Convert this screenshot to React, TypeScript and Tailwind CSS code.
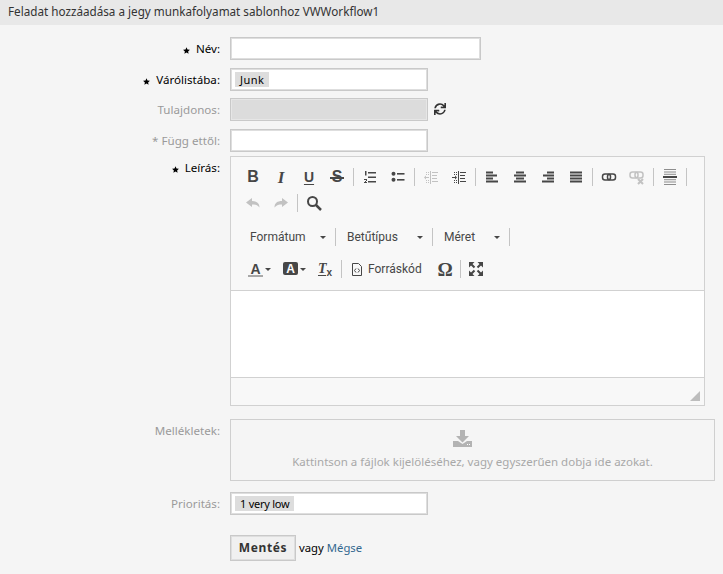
import React from "react";
import { FaSync } from "react-icons/fa";

const font = "font-['Noto_Sans',sans-serif]";
const Star = () => (
  <svg width="7" height="7" viewBox="0 0 24 24" className="mr-[6px] mt-[4px] shrink-0"><path fill="#000" d="M12 1l3.400 7.600 8.300.9-6.200 5.600 1.800 8.200L12 19.100l-7.300 4.200 1.800-8.200L.3 9.500l8.300-.9z" /></svg>
);

function Row({ label, star, muted, className = "", children }: { label: string; star?: boolean; muted?: boolean; className?: string; children: React.ReactNode }) {
  return (
    <div className={`flex items-start ${className}`}>
      <label className={`mr-[10px] flex h-[23px] w-[220px] shrink-0 items-center justify-end text-[11.6px] ${muted ? "text-[#9a9a9a]" : "text-black"}`}>
        {star && <Star />}
        {label}
      </label>
      {children}
    </div>
  );
}

const boxCls = "flex h-[23px] items-center border border-[#c9c9c9] bg-white shadow-[inset_0_0_0_1px_#dedede]";
const Token = ({ children, tight }: { children: React.ReactNode; tight?: boolean }) => (
  <span className={`ml-[4px] flex h-[15px] items-center bg-[#dddddd] px-[5px] text-[11px] leading-none text-black ${tight ? "tracking-[-0.25px]" : "tracking-[0.45px]"}`}>{children}</span>
);

const Btn = ({ children, off }: { children: React.ReactNode; off?: boolean }) => (
  <span className={`flex h-[26px] w-[28px] shrink-0 items-center justify-center text-[#474747] ${off ? "opacity-30" : ""}`}>{children}</span>
);
const Sep = ({ narrow }: { narrow?: boolean }) => (
  <span className={`flex h-[18px] shrink-0 justify-center ${narrow ? "w-[3px]" : "w-[5px]"}`}><span className="h-full w-px bg-[#c4c4c4]" /></span>
);
const Ico = ({ children }: { children: React.ReactNode }) => (
  <svg width="16" height="16" viewBox="0 0 16 16" fill="#474747">{children}</svg>
);
const Lines = ({ rows }: { rows: [number, number][] }) => (
  <Ico>{rows.map(([x, w], i) => <rect key={i} x={x} y={2.5 + i * 3} width={w} height="2" />)}</Ico>
);
const Glyph = ({ className, children }: { className: string; children: React.ReactNode }) => (
  <span className={`font-['Liberation_Sans',sans-serif] leading-none ${className}`}>{children}</span>
);
const IndentLines = () => (
  <>
    <rect x="7" y="2" width="1" height="13" />
    <rect x="9" y="3" width="6" height="1" />
    <rect x="9" y="6" width="5" height="1" />
    <rect x="9" y="9" width="5" height="1" />
    <rect x="9" y="12" width="6" height="1" />
    <rect x="3" y="3" width="1" height="1" /><rect x="5" y="3" width="1" height="1" />
    <rect x="3" y="5" width="1" height="1" /><rect x="5" y="5" width="1" height="1" />
    <rect x="3" y="11" width="1" height="1" /><rect x="5" y="11" width="1" height="1" />
    <rect x="3" y="13" width="1" height="1" /><rect x="5" y="13" width="1" height="1" />
  </>
);

const Combo = ({ label, w, pl }: { label: string; w: string; pl: string }) => (
  <>
    <span className={`flex h-[26px] ${w} ${pl} items-center justify-between pr-[7px] font-['Roboto',sans-serif] text-[12px] text-[#474747]`}>
      {label}
      <span className="h-0 w-0 border-x-[3px] border-t-[3px] border-x-transparent border-t-[#474747]" />
    </span>
    <Sep />
  </>
);

const Arrow = () => <span className="ml-[2px] mt-[1px] h-0 w-0 border-x-[3px] border-t-[3px] border-x-transparent border-t-[#474747]" />;

export default function App() {
  return (
    <div className={`h-[574px] w-[723px] overflow-hidden bg-[#f5f5f5] ${font}`}>
      <h2 className="flex h-[25px] items-center bg-[#e8e8e8] pb-[1px] pl-[8px] text-[11.7px] font-normal text-[#333333]">
        Feladat hozzáadása a jegy munkafolyamat sablonhoz VWWorkflow1
      </h2>
      <div className="flex flex-col pt-[12px]">
        <Row label="Név:" star><div className={`${boxCls} w-[251px]`} /></Row>
        <Row label="Várólistába:" star className="mt-[8px]">
          <div className={`${boxCls} w-[198px]`}><Token>Junk</Token></div>
        </Row>
        <Row label="Tulajdonos:" muted className="mt-[7px]">
          <div className="h-[23px] w-[198px] border border-[#c9c9c9] bg-[#dcdcdc] shadow-[inset_0_0_0_1px_#e6e6e6]" />
          <FaSync className="ml-[6px] mt-[5px] text-[12px] text-[#333]" />
        </Row>
        <Row label="* Függ ettől:" muted className="mt-[8px]"><div className={`${boxCls} w-[198px]`} /></Row>

        <Row label="Leírás:" star className="mt-[4px]">
          <div className="flex h-[250px] w-[475px] flex-col border border-[#d1d1d1] bg-[#f8f8f8]">
            <div className="h-[134px] border-b border-[#d1d1d1] pl-[8px] pt-[7px]">
              <div className="flex h-[26px] items-center">
                <Btn><Glyph className="text-[16px] font-bold">B</Glyph></Btn>
                <Btn><Glyph className="font-['Liberation_Serif',serif] text-[17px] font-bold italic">I</Glyph></Btn>
                <Btn><Glyph className="text-[14px] font-bold underline underline-offset-2">U</Glyph></Btn>
                <Btn>
                  <span className="relative flex items-center justify-center">
                    <Glyph className="text-[16px] font-bold">S</Glyph>
                    <span className="absolute left-[-2px] right-[-2px] top-1/2 h-[1.5px] bg-[#474747]" />
                  </span>
                </Btn>
                <Sep />
                <Btn><Ico><rect x="6" y="3" width="8" height="1.500" /><rect x="6" y="7.500" width="8" height="1.500" /><rect x="6" y="12" width="8" height="1.500" /><rect x="3" y="2" width="1.500" height="4.500" /><rect x="2" y="10" width="3" height="1" /><rect x="4" y="11" width="1" height="1" /><rect x="3" y="12" width="1" height="1" /><rect x="2" y="13" width="3" height="1" /></Ico></Btn>
                <Btn><Ico><rect x="7" y="4" width="7.500" height="1.600" /><rect x="7" y="10" width="7.500" height="1.600" /><circle cx="3.500" cy="4.800" r="2" /><circle cx="3.500" cy="10.800" r="2" /></Ico></Btn>
                <Sep />
                <Btn off><Ico><IndentLines /><path d="M1 8.500L3 6.500v1.500h3v1H3v1.500z" /></Ico></Btn>
                <Btn><Ico><IndentLines /><path d="M6 8.500L4 6.500v1.500H1v1h3v1.500z" /></Ico></Btn>
                <Sep />
                <Btn><Lines rows={[[2, 7], [2, 11], [2, 7], [2, 12]]} /></Btn>
                <Btn><Lines rows={[[4, 8], [2, 12], [4, 8], [2, 12]]} /></Btn>
                <Btn><Lines rows={[[7, 7], [3, 11], [7, 7], [2, 12]]} /></Btn>
                <Btn><Lines rows={[[2, 12], [2, 12], [2, 12], [2, 12]]} /></Btn>
                <Sep />
                <Btn><svg width="16" height="16" viewBox="0 0 16 16" fill="none" stroke="#474747" strokeWidth="1.500"><rect x="1.500" y="5" width="8" height="6" rx="2.500" /><rect x="6.500" y="5" width="8" height="6" rx="2.500" /></svg></Btn>
                <Btn off><svg width="16" height="16" viewBox="0 0 16 16" fill="none" stroke="#474747" strokeWidth="1.500"><rect x="1" y="3" width="8" height="6" rx="2.500" /><rect x="6" y="3" width="8" height="6" rx="2.500" /><path d="M9 10l5 5m0-5l-5 5" strokeWidth="2" /></svg></Btn>
                <Sep />
                <Btn><Ico><rect x="2" y="0" width="12" height="1" opacity=".6" /><rect x="2" y="2.500" width="12" height="1" opacity=".6" /><rect x="2" y="4.800" width="12" height="1" opacity=".6" /><rect x="1" y="7" width="14" height="2" /><rect x="2" y="10.200" width="12" height="1" opacity=".6" /><rect x="2" y="12.500" width="12" height="1" opacity=".6" /><rect x="2" y="15" width="12" height="1" opacity=".6" /></Ico></Btn>
                <Sep />
              </div>
              <div className="flex h-[26px] items-center">
                <Btn off><Ico><path d="M1 7.500l6-4.500v3c4.500 0 7.500 2 7.500 6.500C12.500 10 10 9.500 7 9.500V12z" /></Ico></Btn>
                <Btn off><Ico><path d="M15 7.500L9 3v3C4.500 6 1.500 8 1.500 12.500 3.500 10 6 9.500 9 9.500V12z" /></Ico></Btn>
                <Sep />
                <Btn><svg width="16" height="16" viewBox="0 0 16 16" fill="none" stroke="#474747" strokeWidth="2"><circle cx="6.500" cy="6.500" r="4.500" /><path d="M10 10l5 5" strokeWidth="2.500" /></svg></Btn>
              </div>
              <div className="mt-[8px] flex h-[26px] items-center">
                <Combo label="Formátum" w="w-[94px]" pl="pl-[11px]" />
                <Combo label="Betűtípus" w="w-[92px]" pl="pl-[9px]" />
                <Combo label="Méret" w="w-[72px]" pl="pl-[9px]" />
              </div>
              <div className="mt-[6px] flex h-[26px] items-center">
                <span className="flex h-[26px] w-[35px] shrink-0 items-start pl-[9px] pt-[6px]">
                  <span className="flex flex-col items-center"><Glyph className="h-[11px] text-[14px] font-bold text-[#474747]">A</Glyph><span className="mt-[2px] h-[2px] w-[15px] bg-[#a8a8a8]" /></span><span className="mt-[5px] flex"><Arrow /></span>
                </span>
                <span className="flex h-[26px] w-[35px] shrink-0 items-center pb-[1px] pl-[9px]">
                  <span className="flex h-[13px] w-[15px] items-center justify-center rounded-[2px] bg-[#474747]"><Glyph className="text-[12px] font-bold text-white">A</Glyph></span><Arrow />
                </span>
                <span className="flex h-[26px] w-[30px] shrink-0 items-center pl-[9px] text-[#474747]">
                  <span className="flex flex-col items-center"><Glyph className="h-[12px] font-['Liberation_Serif',serif] text-[14px] font-bold italic">T</Glyph><span className="mt-[1px] h-[1px] w-[8px] bg-[#474747]" /></span>
                  <Glyph className="mt-[7px] text-[10px] font-bold">x</Glyph>
                </span>
                <Sep />
                <span className="flex h-[26px] w-[87px] shrink-0 items-center pl-[7px] font-['Roboto',sans-serif] text-[12px] text-[#474747]">
                  <svg width="12" height="15" viewBox="0 0 12 15" fill="none" stroke="#474747" className="mr-[5px]"><path d="M1.500 1.500h6l3 3v9h-9z" /><path d="M5 6.500L3.500 8.500 5 10.500M7 6.500l1.500 2L7 10.500" /></svg>
                  Forráskód
                </span>
                <Btn><Glyph className="font-['Liberation_Serif',serif] text-[19px] font-bold">Ω</Glyph></Btn>
                <Sep narrow />
                <Btn>
                  <svg width="16" height="16" viewBox="0 0 16 16" fill="#474747" stroke="none">
                    <path d="M1 1h5.500L1 6.500zM15 1H9.500L15 6.500zM1 15h5.500L1 9.500zM15 15H9.500L15 9.500z" />
                    <path d="M3 3l3.500 3.500M13 3L9.500 6.500M3 13l3.500-3.500M13 13L9.500 9.500" stroke="#474747" strokeWidth="2" />
                  </svg>
                </Btn>
              </div>
            </div>
            <div className="h-[86px] bg-white" />
            <div className="relative flex-1 border-t border-[#d1d1d1]">
              <span className="absolute bottom-[4px] right-[4px] h-0 w-0 border-b-[10px] border-l-[10px] border-b-[#bdbdbd] border-l-transparent" />
            </div>
          </div>
        </Row>

        <Row label="Mellékletek:" muted className="mt-[13px]">
          <div className="flex h-[62px] w-[485px] flex-col items-center border border-[#cfcfcf] text-[11.5px] text-[#a8a8a8]">
            <svg width="19" height="17" viewBox="0 0 19 17" fill="#b3b3b3" className="mr-[20px] mt-[10px]"><path d="M7 0h5v6h4l-6.500 6.500L3 6h4z" /><path d="M0 11h5l4.500 3 4.500-3h5v6H0z" /><rect x="14" y="14" width="1" height="1" fill="#fff" /><rect x="16" y="14" width="1" height="1" fill="#fff" /></svg>
            <span className="mt-[6px]">Kattintson a fájlok kijelöléséhez, vagy egyszerűen dobja ide azokat.</span>
          </div>
        </Row>

        <Row label="Prioritás:" muted className="mt-[11px]">
          <div className={`${boxCls} w-[198px]`}><Token tight>1 very low</Token></div>
        </Row>

        <div className="ml-[230px] mt-[20px] flex items-center text-[11.3px]">
          <button className="h-[26px] w-[66px] border border-[#c9c9c9] bg-[#f0f0f0] text-[12px] font-bold tracking-[0.6px] text-[#333] shadow-[inset_0_0_0_1px_#dedede]">Mentés</button>
          <span className="ml-[3px] text-black">vagy</span>
          <a className="ml-[3px] text-[#33688f]">Mégse</a>
        </div>
      </div>
    </div>
  );
}
